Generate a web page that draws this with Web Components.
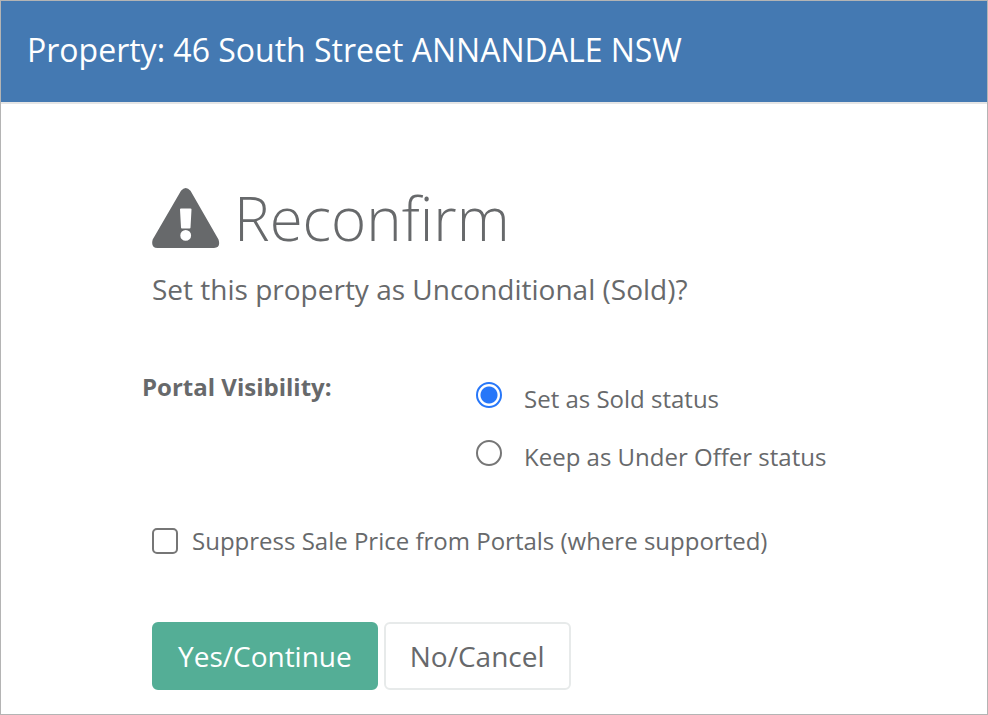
<!DOCTYPE html>
<html lang="en">
<head>
<meta charset="utf-8">
<title>Reconfirm</title>
<style>
*{box-sizing:border-box}
body{margin:0;font-family:"Open Sans",sans-serif;color:#67696b;background:#fff}
</style>
</head>
<body>
<confirm-dialog>
  <span slot="title">Property: 46 South Street ANNANDALE NSW</span>
  <confirm-heading>Reconfirm</confirm-heading>
  <confirm-message>Set this property as Unconditional (Sold)?</confirm-message>
  <portal-visibility></portal-visibility>
  <check-option>Suppress Sale Price from Portals (where supported)</check-option>
  <dialog-actions></dialog-actions>
</confirm-dialog>
<script>
function define(name, html) {
  const template = document.createElement('template');
  template.innerHTML = html;
  customElements.define(name, class extends HTMLElement {
    constructor() {
      super();
      this.attachShadow({ mode: 'open' }).append(template.content.cloneNode(true));
    }
  });
}

define('confirm-dialog', `
<style>
:host{display:flex;flex-direction:column;box-sizing:border-box;min-height:100vh;border:1px solid #b4b4b4;background:#fff}
header{background:#4479b2;color:#fff;padding:25px 26px 28px;border-bottom:2px solid #e5e5e5}
h1{margin:0;font-size:32px;line-height:48px;font-weight:400}
main{padding:78px 10px 20px 151px}
</style>
<header><h1><slot name="title"></slot></h1></header>
<main><slot></slot></main>`);

define('confirm-heading', `
<style>
:host{display:block}
h2{display:flex;align-items:center;gap:14px;margin:0;font-size:60px;line-height:72px;font-weight:300}
svg{width:68px;height:60px;flex:none}
</style>
<h2><svg viewBox="0 0 68 60" aria-hidden="true"><path fill="#67696b" fill-rule="evenodd" d="M29 2.800Q33.700-2.800 38.500 2.800L66.500 51.500Q69 59.500 62 60H5.500Q-1.500 59.500 .7 51.500ZM28 21.500L29 39.500Q29 40.500 30 40.500H37.500Q38.500 40.500 38.500 39.500L39.500 21.500Q39.500 20.500 38.500 20.500H29Q28 20.500 28 21.500ZM33.700 42A5.400 5.400 0 1 0 33.700 52.800A5.400 5.400 0 1 0 33.700 42Z"/></svg><slot></slot></h2>`);

define('confirm-message', `
<style>
:host{display:block}
p{margin:13px 0 0;font-size:28px;line-height:44px}
</style>
<p><slot></slot></p>`);

define('portal-visibility', `
<style>
:host{display:block;margin:58px 0 0 -10px}
fieldset{display:grid;grid-template-columns:2fr 3fr;border:0;margin:0;padding:0;min-width:0}
.name{font-size:24px;line-height:36px;font-weight:700}
.options{display:grid;gap:22px;padding-top:12px}
label{display:flex;gap:22px;font-size:24px;line-height:36px}
input{appearance:none;box-sizing:border-box;flex:none;width:26px;height:26px;margin:1px 0 0;border:2px solid #767676;border-radius:50%;background:#fff}
input:checked{border-color:#2777f9;background:radial-gradient(circle,#2777f9 0 8px,#fff 9px)}
</style>
<fieldset aria-labelledby="name">
<div class="name" id="name">Portal Visibility:</div>
<div class="options">
<label><input type="radio" name="status" checked><span>Set as Sold status</span></label>
<label><input type="radio" name="status"><span>Keep as Under Offer status</span></label>
</div>
</fieldset>`);

define('check-option', `
<style>
:host{display:block;margin-top:48px}
label{display:flex;align-items:center;gap:14px;font-size:24px;line-height:36px}
input{appearance:none;box-sizing:border-box;flex:none;width:26px;height:26px;margin:0;border:2px solid #767676;border-radius:5px;background:#fff}
input:checked{background:#2777f9;border-color:#2777f9}
</style>
<label><input type="checkbox"><span><slot></slot></span></label>`);

define('dialog-actions', `
<style>
:host{display:flex;flex-wrap:wrap;gap:6px;margin-top:63px}
button{font:400 28px/40px "Open Sans",sans-serif;padding:12px 24px;border:2px solid #e7eaea;border-radius:6px;background:#fff;color:#67696b}
.primary{background:#54ae96;border-color:#54ae96;color:#fff}
</style>
<button class="primary" type="button">Yes/Continue</button><button type="button">No/Cancel</button>`);
</script>
</body>
</html>
